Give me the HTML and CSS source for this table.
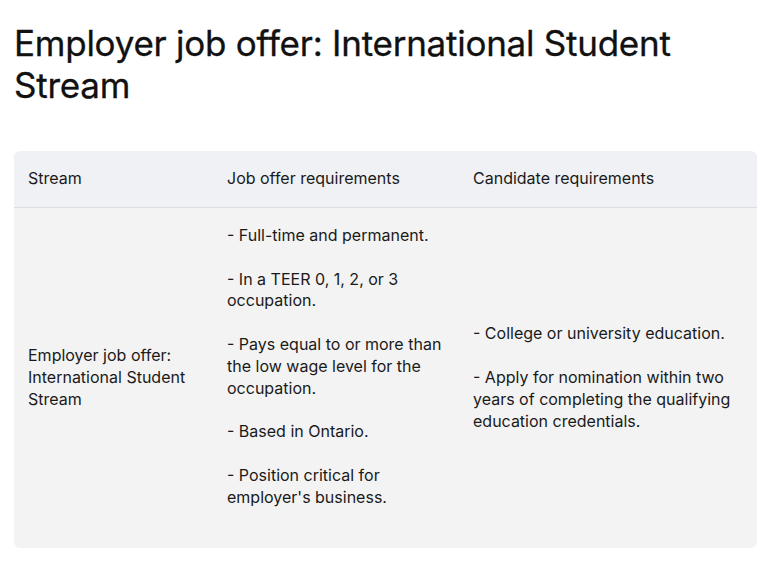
FILE: index.html
```html
<!DOCTYPE html>
<html lang="en">
<head>
    <meta charset="UTF-8">
    <meta name="viewport" content="width=device-width, initial-scale=1.0">
    <title>Employer job offer: International Student Stream</title>
    <link rel="stylesheet" href="styles.css">
</head>
<body>
    <div class="page">
        <h1>Employer job offer: International Student Stream</h1>

        <table class="streams">
            <thead>
                <tr>
                    <th class="col-stream">Stream</th>
                    <th class="col-job">Job offer requirements</th>
                    <th class="col-cand">Candidate requirements</th>
                </tr>
            </thead>
            <tbody>
                <tr>
                    <td>Employer job offer: International Student Stream</td>
                    <td class="job">
                        - Full-time and permanent.<br><br>
                        - In a TEER 0, 1, 2, or 3 occupation.<br><br>
                        - Pays equal to or more than the low wage level for the occupation.<br><br>
                        - Based in Ontario.<br><br>
                        - Position critical for employer's business.
                    </td>
                    <td>
                        - College or university education.<br><br>
                        - Apply for nomination within two years of completing the qualifying education credentials.
                    </td>
                </tr>
            </tbody>
        </table>
    </div>
</body>
</html>
```

FILE: styles.css
```css
body {
    margin: 0;
    background-color: #fff;
    color: #111;
    font-family: Inter, "Noto Sans", sans-serif;
}

.page {
    padding: 0 9px 0 14px;
}

h1 {
    font-size: 35px;
    font-weight: 400;
    line-height: 42px;
    letter-spacing: -0.25px;
    margin: 22px 0 45px;
    color: #111;
    -webkit-text-stroke: 0.3px #111;
}

.streams {
    width: 743px;
    border-collapse: separate;
    border-spacing: 0;
    font-size: 16px;
    line-height: 21.85px;
    color: #1a1a1a;
}

.streams th {
    background-color: #f0f1f4;
    font-weight: 400;
    text-align: left;
    padding: 17px 14px;
    border-bottom: 1px solid #dcdde0;
}

.streams th:first-child {
    border-top-left-radius: 6px;
}

.streams th:last-child {
    border-top-right-radius: 6px;
}

.col-stream {
    width: 171px;
}

.col-job {
    width: 218px;
}

.streams td {
    background-color: #f3f3f3;
    vertical-align: middle;
    padding: 16px 14px;
}

.streams td.job {
    padding-top: 17px;
    padding-bottom: 39px;
}

.streams td:first-child {
    border-bottom-left-radius: 6px;
}

.streams td:last-child {
    border-bottom-right-radius: 6px;
}
```
